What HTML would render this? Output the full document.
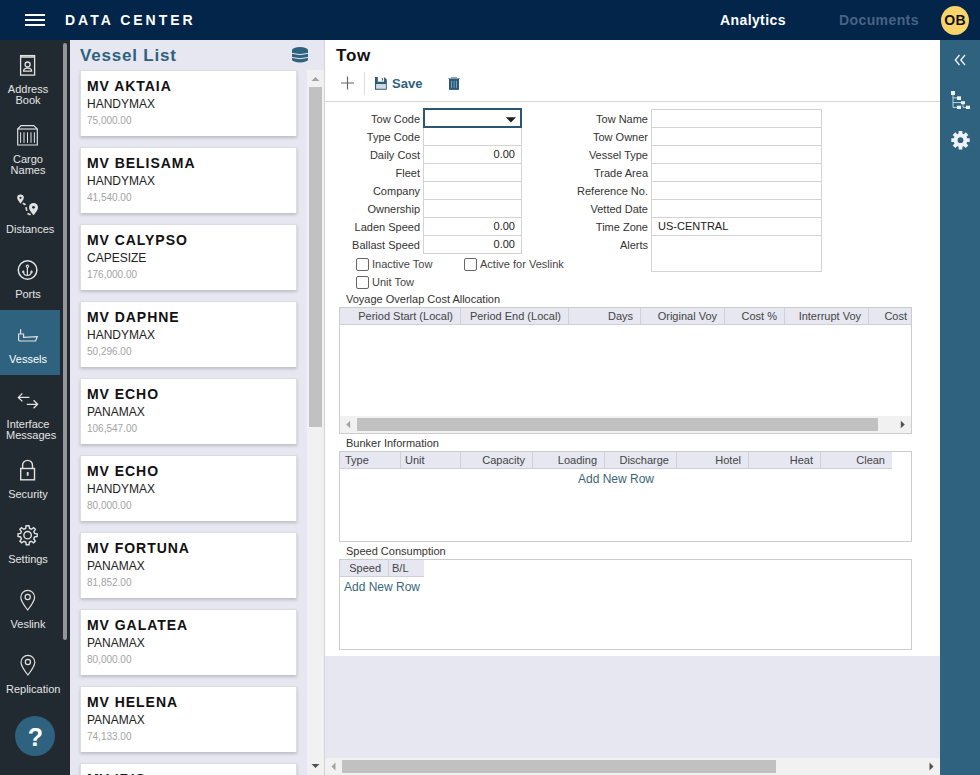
<!DOCTYPE html>
<html><head><meta charset="utf-8">
<style>
*{box-sizing:border-box;margin:0;padding:0}
html,body{width:980px;height:775px;overflow:hidden;background:#e6e7f0;font-family:"Liberation Sans",sans-serif}
.abs{position:absolute}
#hdr{position:absolute;left:0;top:0;width:980px;height:40px;background:#022549}
#hdr .ham{position:absolute;left:25px;width:20px;height:2px;background:#fff}
#hdr .title{position:absolute;left:65px;top:12px;font-size:14px;font-weight:bold;color:#fff;letter-spacing:3px;line-height:16px}
#hdr .nav{position:absolute;top:12px;font-size:14px;font-weight:bold;line-height:16px;letter-spacing:0.4px}
#hdr .av{position:absolute;left:941px;top:6px;width:28px;height:29px;border-radius:50%;background:#f9d46b;color:#111;font-size:14px;font-weight:bold;text-align:center;line-height:29px;letter-spacing:0.2px}
#side{position:absolute;left:0;top:40px;width:70px;height:735px;background:#222a31}
#side .sb{position:absolute;left:63px;top:3px;width:4px;height:597px;background:#959595;border-radius:2px}
.lb{position:absolute;left:6px;width:44px;text-align:center;color:#e4e4e4;font-size:11px;line-height:11px;white-space:nowrap}
#help{position:absolute;left:15px;top:716px;width:40px;height:40px;border-radius:50%;background:#2e627f;color:#fff;font-weight:bold;font-size:25px;text-align:center;line-height:42px;text-indent:1px}
#vl{position:absolute;left:70px;top:40px;width:255px;height:735px;background:#e6e7f0}
.vt{position:absolute;left:80px;top:46px;font-size:17px;font-weight:bold;color:#2e627f;line-height:20px;letter-spacing:0.8px}
.card{position:absolute;left:80px;width:217px;height:66px;background:#fff;border:1px solid #dcdde2;border-bottom:none;box-shadow:0 2px 3px rgba(0,0,0,0.18)}
.card .n{position:absolute;left:6px;top:7px;font-size:14px;font-weight:bold;letter-spacing:0.95px;color:#111;line-height:16px}
.card .c{position:absolute;left:6px;top:26px;font-size:12px;color:#222;line-height:14px}
.card .v{position:absolute;left:6px;top:44px;font-size:10px;color:#a3a3a3;line-height:12px}
.vsb{position:absolute;left:307px;top:70px;width:17px;height:705px;background:#f1f1f1}
#main{position:absolute;left:325px;top:40px;width:615px;height:616px;background:#fff}
#rs{position:absolute;left:940px;top:40px;width:40px;height:735px;background:#2e627f}
.lbl{position:absolute;font-size:11px;color:#333;text-align:right;line-height:20px;white-space:nowrap}
.inp{position:absolute;border:1px solid #d3d3d3;background:#fff;height:19px;font-size:11px;line-height:17px;color:#222}
.cb{width:13px;height:13px;border:1px solid #666;border-radius:2px;background:#fff}
.ct{font-size:11px;color:#444;line-height:16px;white-space:nowrap}
.sect{font-size:11px;color:#333;line-height:14px;white-space:nowrap}
.grid{border:1px solid #ccc;background:#fff}
.gh{background:#e6e7f0;border-bottom:1px solid #d0d0d8}
.ghc{position:absolute;height:16px;line-height:16px;font-size:11px;color:#444;white-space:nowrap;border-right:1px solid #d0d0d8}
.addr{font-size:12px;color:#3a6678;line-height:14px;white-space:nowrap}
</style></head><body>
<div id="hdr">
  <div class="ham" style="top:14px"></div>
  <div class="ham" style="top:19px"></div>
  <div class="ham" style="top:24px"></div>
  <div class="title">DATA CENTER</div>
  <div class="nav" style="left:720px;color:#fff">Analytics</div>
  <div class="nav" style="left:839px;color:#4a6383">Documents</div>
  <div class="av">OB</div>
</div>
<div id="side">
  <div class="sb"></div>
  <div class="sel" style="position:absolute;left:0;top:270px;width:60px;height:65px;background:#2e627f"></div>
</div>
<svg class="abs" style="left:0;top:0" width="70" height="775" fill="none" stroke="#e2e2e2" stroke-width="1.3">
  <!-- address book -->
  <rect x="20.6" y="55.6" width="14" height="19.5" />
  <line x1="20.6" y1="57" x2="34.6" y2="57" stroke-width="1.5"/>
  <circle cx="27.6" cy="64.5" r="2.5"/>
  <path d="M23.6,71.2 C23.6,67.2 31.6,67.2 31.6,71.2 Z"/>
  <!-- cargo -->
  <path d="M17.7,129 L21,125.6 L33.8,125.6 L37.3,129 L37.3,145 L17.7,145 Z" stroke-width="1.15"/>
  <line x1="17.7" y1="129" x2="37.3" y2="129" stroke-width="1.15"/>
  <path d="M20.6,132.3 V142.8 M24,132.3 V142.8 M27.5,132.3 V142.8 M31,132.3 V142.8 M34.4,132.3 V142.8" stroke-width="1"/>
  <!-- distances -->
  <path d="M20.5,203.8 C18.5,201 17.2,199.5 17.2,197.8 A3.3,3.3 0 0 1 23.8,197.8 C23.8,199.5 22.5,201 20.5,203.8 Z" fill="#e2e2e2" stroke="none"/>
  <circle cx="20.5" cy="197.8" r="1.1" fill="#222a31" stroke="none"/>
  <path d="M33.5,215.2 C30.5,211.5 29,209.5 29,207.5 A4.5,4.5 0 0 1 38,207.5 C38,209.5 36.5,211.5 33.5,215.2 Z" fill="#e2e2e2" stroke="none"/>
  <circle cx="33.5" cy="207.3" r="1.4" fill="#222a31" stroke="none"/>
  <path d="M22.8,203.2 L25.6,204.8 M26,207.2 L26.8,210.8 M27.5,213.4 L30.6,214.8" stroke-width="1.6"/>
  <!-- ports -->
  <circle cx="27.6" cy="270" r="9.3" stroke-width="1.5"/>
  <circle cx="27.4" cy="266.3" r="1.2" stroke-width="1.1"/>
  <path d="M27.4,267.5 V275.5 M23.2,271.5 C23.5,274 25.5,275.5 27.4,275.5 C29.3,275.5 31.3,274 31.6,271.5" stroke-width="1.2"/>
  <path d="M22.3,272.3 L23.2,270.6 L24.3,272.3 Z M30.5,272.3 L31.6,270.6 L32.5,272.3 Z" fill="#e2e2e2" stroke-width="0.8"/>
  <!-- vessels -->
  <path d="M20.6,329.3 V334 M18.6,334 H23.6 V337.3 L37.3,336.6 L35.6,341 H19.4 L18.6,340 Z" stroke-width="1.2"/>
  <!-- interface -->
  <path d="M29.4,397.4 H18.6 M22.4,393.4 L18.3,397.4 L22.4,401.4 M26.8,404.3 H37.4 M33.6,400.3 L37.6,404.3 L33.6,408.3" stroke-width="1.3"/>
  <!-- security -->
  <path d="M22.6,468.5 V465.3 A4.95,4.95 0 0 1 32.5,465.3 V468.5" stroke-width="1.4"/>
  <rect x="20.7" y="468.5" width="13.8" height="11.3" stroke-width="1.4"/>
  <path d="M27.7,472 V475.8" stroke-width="1.8"/>
  <!-- settings -->
  <g transform="translate(27.6,535.2) scale(0.93)">
  <path id="gear" d="M-1.6,-9.7 L1.6,-9.7 L2.1,-6.8 L4.1,-5.9 L6.5,-7.6 L8.4,-5.7 L6.7,-3.3 L7.5,-1.4 L10.3,-0.9 L10.3,1.9 L7.5,2.4 L6.6,4.5 L8.3,6.8 L6.4,8.7 L4,7.0 L2,7.9 L1.5,10.7 L-1.5,10.7 L-2,7.9 L-4,7 L-6.4,8.7 L-8.3,6.8 L-6.6,4.5 L-7.5,2.4 L-10.3,1.9 L-10.3,-0.9 L-7.5,-1.4 L-6.7,-3.3 L-8.4,-5.7 L-6.5,-7.6 L-4.1,-5.9 L-2.1,-6.8 Z" stroke-width="1.5" transform="translate(0,-0.5)"/>
  <circle cx="0" cy="0" r="4" stroke-width="1.5"/>
  </g>
  <!-- veslink -->
  <path d="M27.7,610 C23,604 20.8,600.5 20.8,597.2 A6.9,6.9 0 0 1 34.6,597.2 C34.6,600.5 32.4,604 27.7,610 Z" stroke-width="1.2"/>
  <circle cx="27.7" cy="597" r="2.6" stroke-width="1.2"/>
  <!-- replication -->
  <path d="M27.9,675 C23.2,669 21,665.5 21,662.2 A6.9,6.9 0 0 1 34.8,662.2 C34.8,665.5 32.6,669 27.9,675 Z" stroke-width="1.2"/>
  <circle cx="27.9" cy="662" r="2.6" stroke-width="1.2"/>
</svg>
<div class="lb" style="top:84px">Address<br>Book</div>
<div class="lb" style="top:154px">Cargo<br>Names</div>
<div class="lb" style="top:224px">Distances</div>
<div class="lb" style="top:289px">Ports</div>
<div class="lb" style="top:354px;color:#fff">Vessels</div>
<div class="lb" style="top:419px">Interface<br>Messages</div>
<div class="lb" style="top:489px">Security</div>
<div class="lb" style="top:554px">Settings</div>
<div class="lb" style="top:619px">Veslink</div>
<div class="lb" style="top:684px">Replication</div>
<div id="help">?</div>
<div id="vl"></div>
<div class="vt">Vessel List</div>
<svg class="abs" style="left:291px;top:46px" width="18" height="18" viewBox="0 0 18 18">
<path d="M1,4 A8,3 0 0 1 17,4 V13.5 A8,3 0 0 1 1,13.5 Z" fill="#2e627f"/>
<path d="M0.5,7.3 Q9,9.9 17.5,7.3 M0.5,11.4 Q9,14 17.5,11.4" stroke="#e6e7f0" stroke-width="1" fill="none"/>
</svg>
<div class="card" style="top:70px"><div class="n">MV AKTAIA</div><div class="c">HANDYMAX</div><div class="v">75,000.00</div></div>
<div class="card" style="top:147px"><div class="n">MV BELISAMA</div><div class="c">HANDYMAX</div><div class="v">41,540.00</div></div>
<div class="card" style="top:224px"><div class="n">MV CALYPSO</div><div class="c">CAPESIZE</div><div class="v">176,000.00</div></div>
<div class="card" style="top:301px"><div class="n">MV DAPHNE</div><div class="c">HANDYMAX</div><div class="v">50,296.00</div></div>
<div class="card" style="top:378px"><div class="n">MV ECHO</div><div class="c">PANAMAX</div><div class="v">106,547.00</div></div>
<div class="card" style="top:455px"><div class="n">MV ECHO</div><div class="c">HANDYMAX</div><div class="v">80,000.00</div></div>
<div class="card" style="top:532px"><div class="n">MV FORTUNA</div><div class="c">PANAMAX</div><div class="v">81,852.00</div></div>
<div class="card" style="top:609px"><div class="n">MV GALATEA</div><div class="c">PANAMAX</div><div class="v">80,000.00</div></div>
<div class="card" style="top:686px"><div class="n">MV HELENA</div><div class="c">PANAMAX</div><div class="v">74,133.00</div></div>
<div class="card" style="top:763px"><div class="n">MV IRIS</div><div class="c">PANAMAX</div><div class="v">70,000.00</div></div>
<div class="vsb"></div>
<div class="abs" style="left:309px;top:87px;width:13px;height:340px;background:#c1c1c1"></div>
<svg class="abs" style="left:307px;top:70px" width="17" height="17"><path d="M4.5,11 L8.5,7 L12.5,11 Z" fill="#a3a3a3"/></svg>
<svg class="abs" style="left:307px;top:758px" width="17" height="17"><path d="M4.5,6 L8.5,10 L12.5,6 Z" fill="#505050"/></svg>
<div class="abs" style="left:324px;top:40px;width:1px;height:735px;background:#d4d4d8"></div>
<div id="main"></div>
<div class="abs" style="left:336px;top:46px;font-size:17px;font-weight:bold;color:#111;line-height:20px;letter-spacing:0.8px">Tow</div>
<svg class="abs" style="left:325px;top:70px" width="150" height="30">
  <path d="M22.5,6.5 V19.5 M16,13 H29" stroke="#666" stroke-width="1.2" fill="none"/>
  <line x1="39.5" y1="2" x2="39.5" y2="25" stroke="#ddd" stroke-width="1"/>
  <path d="M50,7 H52.8 V11.8 H59.1 V7 L61.8,9.4 V19.8 H50 Z" fill="#2b5a78"/>
  <rect x="56.9" y="8" width="1" height="2.6" fill="#2b5a78"/>
  <rect x="51.1" y="14.1" width="9.8" height="4.6" fill="#e3e9f0"/>
  <path d="M51.1,15.6 H60.9 M51.1,17.1 H60.9" stroke="#a9b9c8" stroke-width="0.5"/>
  <rect x="124" y="8.8" width="10" height="11.1" fill="#2b5a78"/>
  <rect x="123.1" y="8" width="11.8" height="0.9" fill="#7f95a6"/>
  <rect x="126" y="7" width="5.9" height="1.1" fill="#8aa0b0"/>
  <path d="M126.5,10.8 V17.9 M129.1,10.8 V17.9 M131.5,10.8 V17.9" stroke="#8fb0c8" stroke-width="0.8"/>
</svg>
<div class="abs" style="left:392px;top:76px;font-size:13px;font-weight:bold;color:#2e627f;line-height:16px">Save</div>
<div class="abs" style="left:325px;top:101px;width:615px;height:1px;background:#d6d6d6"></div>
<div class="lbl" style="right:560px;top:109px">Tow Code</div>
<div class="inp" style="left:423px;top:109px;width:99px;text-align:right;padding-right:6px"></div>
<div class="lbl" style="right:560px;top:127px">Type Code</div>
<div class="inp" style="left:423px;top:127px;width:99px;text-align:right;padding-right:6px"></div>
<div class="lbl" style="right:560px;top:145px">Daily Cost</div>
<div class="inp" style="left:423px;top:145px;width:99px;text-align:right;padding-right:6px">0.00</div>
<div class="lbl" style="right:560px;top:163px">Fleet</div>
<div class="inp" style="left:423px;top:163px;width:99px;text-align:right;padding-right:6px"></div>
<div class="lbl" style="right:560px;top:181px">Company</div>
<div class="inp" style="left:423px;top:181px;width:99px;text-align:right;padding-right:6px"></div>
<div class="lbl" style="right:560px;top:199px">Ownership</div>
<div class="inp" style="left:423px;top:199px;width:99px;text-align:right;padding-right:6px"></div>
<div class="lbl" style="right:560px;top:217px">Laden Speed</div>
<div class="inp" style="left:423px;top:217px;width:99px;text-align:right;padding-right:6px">0.00</div>
<div class="lbl" style="right:560px;top:235px">Ballast Speed</div>
<div class="inp" style="left:423px;top:235px;width:99px;text-align:right;padding-right:6px">0.00</div>
<div class="abs" style="left:423px;top:108px;width:99px;height:20px;border:2px solid #2a5674;background:#fff"></div>
<svg class="abs" style="left:505px;top:116px" width="13" height="8"><path d="M0.8,1.2 H11 L5.9,6.4 Z" fill="#1e1e1e"/></svg>
<div class="lbl" style="right:332px;top:109px">Tow Name</div>
<div class="inp" style="left:651px;top:109px;width:171px;height:19px;padding-left:6px"></div>
<div class="lbl" style="right:332px;top:127px">Tow Owner</div>
<div class="inp" style="left:651px;top:127px;width:171px;height:19px;padding-left:6px"></div>
<div class="lbl" style="right:332px;top:145px">Vessel Type</div>
<div class="inp" style="left:651px;top:145px;width:171px;height:19px;padding-left:6px"></div>
<div class="lbl" style="right:332px;top:163px">Trade Area</div>
<div class="inp" style="left:651px;top:163px;width:171px;height:19px;padding-left:6px"></div>
<div class="lbl" style="right:332px;top:181px">Reference No.</div>
<div class="inp" style="left:651px;top:181px;width:171px;height:19px;padding-left:6px"></div>
<div class="lbl" style="right:332px;top:199px">Vetted Date</div>
<div class="inp" style="left:651px;top:199px;width:171px;height:19px;padding-left:6px"></div>
<div class="lbl" style="right:332px;top:217px">Time Zone</div>
<div class="inp" style="left:651px;top:217px;width:171px;height:19px;padding-left:6px">US-CENTRAL</div>
<div class="lbl" style="right:332px;top:235px">Alerts</div>
<div class="inp" style="left:651px;top:235px;width:171px;height:37px;padding-left:6px"></div>
<div class="abs cb" style="left:356px;top:258px"></div><div class="abs ct" style="left:372px;top:256px">Inactive Tow</div>
<div class="abs cb" style="left:464px;top:258px"></div><div class="abs ct" style="left:480px;top:256px">Active for Veslink</div>
<div class="abs cb" style="left:356px;top:276px"></div><div class="abs ct" style="left:372px;top:274px">Unit Tow</div>
<div class="abs sect" style="left:346px;top:292px">Voyage Overlap Cost Allocation</div>
<div class="abs grid" style="left:339px;top:307px;width:573px;height:127px"></div>
<div class="abs gh" style="left:340px;top:308px;width:571px;height:17px"></div>
<div class="abs" style="left:340px;top:308px;width:571px;height:17px;overflow:hidden">
<div class="abs ghc" style="left:1px;width:120px;text-align:right;padding-right:7px">Period Start (Local)</div>
<div class="abs ghc" style="left:121px;width:108px;text-align:right;padding-right:7px">Period End (Local)</div>
<div class="abs ghc" style="left:229px;width:72px;text-align:right;padding-right:7px">Days</div>
<div class="abs ghc" style="left:301px;width:84px;text-align:right;padding-right:7px">Original Voy</div>
<div class="abs ghc" style="left:385px;width:60px;text-align:right;padding-right:7px">Cost %</div>
<div class="abs ghc" style="left:445px;width:84px;text-align:right;padding-right:7px">Interrupt Voy</div>
<div class="abs ghc" style="left:529px;width:46px;text-align:right;padding-right:7px">Cost</div>
</div>
<div class="abs" style="left:340px;top:416px;width:571px;height:17px;background:#f1f1f1"></div>
<div class="abs" style="left:357px;top:418px;width:521px;height:13px;background:#c1c1c1"></div>
<svg class="abs" style="left:340px;top:416px" width="571" height="17"><path d="M10.2,4.8 L6.2,8.5 L10.2,12.2 Z" fill="#a3a3a3"/><path d="M560.8,4.8 L564.8,8.5 L560.8,12.2 Z" fill="#505050"/></svg>
<div class="abs sect" style="left:346px;top:436px">Bunker Information</div>
<div class="abs grid" style="left:339px;top:451px;width:573px;height:91px"></div>
<div class="abs gh" style="left:340px;top:452px;width:552px;height:17px"></div>
<div class="abs ghc" style="left:341px;top:452px;width:60px;text-align:left;padding-left:4px">Type</div>
<div class="abs ghc" style="left:401px;top:452px;width:60px;text-align:left;padding-left:4px">Unit</div>
<div class="abs ghc" style="left:461px;top:452px;width:72px;text-align:right;padding-right:7px">Capacity</div>
<div class="abs ghc" style="left:533px;top:452px;width:72px;text-align:right;padding-right:7px">Loading</div>
<div class="abs ghc" style="left:605px;top:452px;width:72px;text-align:right;padding-right:7px">Discharge</div>
<div class="abs ghc" style="left:677px;top:452px;width:72px;text-align:right;padding-right:7px">Hotel</div>
<div class="abs ghc" style="left:749px;top:452px;width:72px;text-align:right;padding-right:7px">Heat</div>
<div class="abs ghc" style="left:821px;top:452px;width:71px;text-align:right;padding-right:7px;border-right:none">Clean</div>
<div class="abs addr" style="left:578px;top:472px">Add New Row</div>
<div class="abs sect" style="left:346px;top:544px">Speed Consumption</div>
<div class="abs grid" style="left:339px;top:559px;width:573px;height:91px"></div>
<div class="abs gh" style="left:340px;top:560px;width:84px;height:17px"></div>
<div class="abs ghc" style="left:341px;top:560px;width:48px;text-align:right;padding-right:7px">Speed</div>
<div class="abs ghc" style="left:389px;top:560px;width:35px;text-align:left;padding-left:3px;border-right:none">B/L</div>
<div class="abs addr" style="left:344px;top:580px">Add New Row</div>
<div class="abs" style="left:325px;top:758px;width:615px;height:17px;background:#f1f1f1"></div>
<div class="abs" style="left:342px;top:760px;width:434px;height:13px;background:#c1c1c1"></div>
<svg class="abs" style="left:325px;top:758px" width="615" height="17"><path d="M10.5,4.5 L6.5,8.5 L10.5,12.5 Z" fill="#a3a3a3"/><path d="M604.5,4.5 L608.5,8.5 L604.5,12.5 Z" fill="#505050"/></svg>
<div id="rs"></div>
<svg class="abs" style="left:940px;top:40px" width="40" height="735">
  <path d="M19.5,15 L15.3,20 L19.5,25 M25,15 L20.8,20 L25,25" stroke="#f4f4f8" stroke-width="1.3" fill="none"/>
  <g fill="#eef2f6">
    <rect x="11" y="51" width="4" height="4"/>
    <rect x="17" y="56.3" width="4" height="3.7"/>
    <rect x="21" y="61.2" width="4" height="3"/>
    <rect x="17" y="65.7" width="4" height="3.3"/>
    <rect x="26" y="65.7" width="4" height="3.3"/>
  </g>
  <path d="M13,55 V67.4 H17 M13,57.9 H17 M13,62.6 H21 M23,64 V67.4 H26" stroke="#c8e4ea" stroke-width="0.9" fill="none"/>
  <path fill-rule="evenodd" fill="#eef2f6" d="M18.59,93.57 L18.63,90.99 L22.37,90.99 L22.41,93.57 L23.84,94.16 L25.69,92.37 L28.33,95.01 L26.54,96.86 L27.13,98.29 L29.71,98.33 L29.71,102.07 L27.13,102.11 L26.54,103.54 L28.33,105.39 L25.69,108.03 L23.84,106.24 L22.41,106.83 L22.37,109.41 L18.63,109.41 L18.59,106.83 L17.16,106.24 L15.31,108.03 L12.67,105.39 L14.46,103.54 L13.87,102.11 L11.29,102.07 L11.29,98.33 L13.87,98.29 L14.46,96.86 L12.67,95.01 L15.31,92.37 L17.16,94.16 Z M23.40,100.20 A2.9,2.9 0 1 0 17.60,100.20 A2.9,2.9 0 1 0 23.40,100.20 Z"/>
</svg>
</body></html>
